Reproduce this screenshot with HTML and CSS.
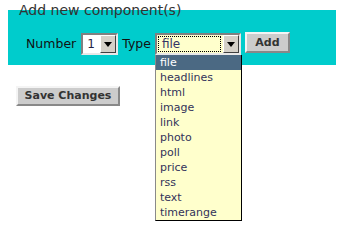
FILE: index.html
```html
<!DOCTYPE html>
<html>
<head>
<meta charset="utf-8">
<link rel="stylesheet" href="styles.css">
</head>
<body>
<form class="page">
  <section class="panel">
    <h2 class="panel-title">Add new component(s)</h2>
    <div class="row">
      <span class="label label-number">Number</span>
      <div class="select select-number">
        <span class="select-value">1</span>
        <span class="select-arrow"><span class="tri"></span></span>
      </div>
      <span class="label label-type">Type</span>
      <div class="select select-type">
        <span class="select-value"><span class="focus-ring">file</span></span>
        <span class="select-arrow"><span class="tri"></span></span>
        <ul class="menu">
          <li class="menu-item is-active">file</li>
          <li class="menu-item">headlines</li>
          <li class="menu-item">html</li>
          <li class="menu-item">image</li>
          <li class="menu-item">link</li>
          <li class="menu-item">photo</li>
          <li class="menu-item">poll</li>
          <li class="menu-item">price</li>
          <li class="menu-item">rss</li>
          <li class="menu-item">text</li>
          <li class="menu-item">timerange</li>
        </ul>
      </div>
      <button type="button" class="btn btn-add">Add</button>
    </div>
  </section>
  <div class="actions">
    <button type="button" class="btn btn-save">Save Changes</button>
  </div>
</form>
</body>
</html>
```
FILE: styles.css
```css
html, body {
  margin: 0;
  padding: 0;
  background: #ffffff;
}
html {
  height: 100%;
}
body {
  min-height: 248px;
  font-family: "DejaVu Sans", "Bitstream Vera Sans", sans-serif;
  color: #1a1a1a;
}
.page {
  padding: 2px 0 0 8px;
  margin: 0;
  min-height: 240px;
}
.panel {
  width: 328px;
  padding: 0 0 10px 0;
  background: linear-gradient(to bottom, transparent 8px, #00cccc 8px);
}
.panel-title {
  margin: 0;
  padding-left: 11px;
  font-size: 14px;
  font-weight: normal;
  line-height: 16px;
  color: #333333;
}
.row {
  display: flex;
  align-items: center;
  height: 22px;
  margin-top: 15px;
  padding-left: 18px;
}
.label {
  font-size: 12.5px;
  line-height: 14px;
  color: #111111;
}
.label-number {
  margin-right: 5px;
}
.label-type {
  margin-left: 4px;
  margin-right: 4px;
}
.select {
  position: relative;
  display: flex;
  box-sizing: border-box;
  height: 22px;
  border-style: solid;
  border-width: 2px;
  border-color: #808080 #e8e8e8 #e8e8e8 #808080;
}
.select-number {
  width: 37px;
  background: #ffffff;
}
.select-type {
  width: 86px;
  background: #ffffcc;
}
.select-value {
  flex: 1;
  display: flex;
  align-items: center;
  font-size: 12px;
  color: #222244;
  padding-left: 4px;
}
.select-type .select-value {
  padding: 1px 2px 1px 1px;
}
.focus-ring {
  flex: 1;
  align-self: stretch;
  display: flex;
  align-items: center;
  padding-left: 3px;
  border: 1px dotted #000000;
  color: #333366;
}
.select-arrow {
  box-sizing: border-box;
  width: 16px;
  display: flex;
  align-items: center;
  justify-content: center;
  background: #d4d0c8;
  border-style: solid;
  border-width: 1px;
  border-color: #ffffff #404040 #404040 #ffffff;
}
.tri {
  width: 0;
  height: 0;
  border-left: 4px solid transparent;
  border-right: 4px solid transparent;
  border-top: 5px solid #000000;
  margin-top: 1px;
}
.menu {
  position: absolute;
  left: -2px;
  top: 20px;
  width: 87px;
  box-sizing: border-box;
  margin: 0;
  padding: 0;
  list-style: none;
  background: #ffffcc;
  border-left: 1px solid #8a8a8a;
  border-right: 1px solid #000000;
  border-bottom: 1px solid #000000;
  z-index: 5;
}
.menu-item {
  height: 15px;
  line-height: 15px;
  font-size: 11px;
  padding-left: 4px;
  color: #33335a;
}
.menu-item.is-active {
  background: #4b6983;
  color: #ffffff;
}
.btn {
  font-family: "DejaVu Sans", sans-serif;
  font-weight: bold;
  font-size: 11px;
  color: #333333;
  background: #cccccc;
  border-style: solid;
  border-width: 2px;
  border-color: #f4f4f4 #888888 #888888 #f4f4f4;
  padding: 0;
  margin: 0;
  box-sizing: border-box;
}
.btn-add {
  align-self: flex-start;
  width: 45px;
  height: 21px;
  margin-left: 4px;
  margin-top: -1px;
}
.actions {
  margin-top: 19px;
  padding-left: 8px;
}
.btn-save {
  width: 104px;
  height: 20px;
}
```
